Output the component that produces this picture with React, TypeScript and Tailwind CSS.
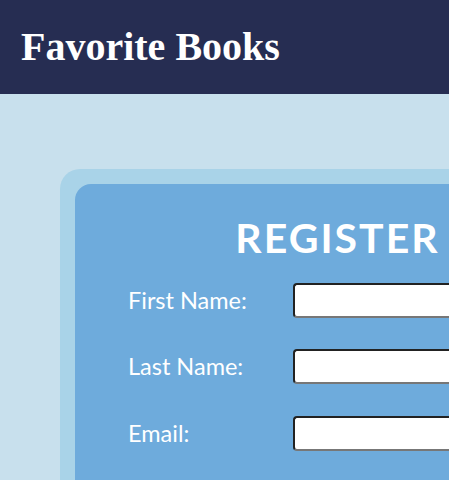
export default function App() {
  const fields = ["First Name:", "Last Name:", "Email:"];

  return (
    <div className="w-[449px] h-[480px] overflow-hidden bg-[#c8e0ed]">
      <header className="bg-[#262d52] h-[94px] flex items-center px-[21px]">
        <h1 className="text-white font-bold text-[40px] leading-none font-['Liberation_Serif',serif]">Favorite Books</h1>
      </header>
      <div className="pt-[75px] pl-[60px]">
        <div className="w-[555px] bg-[#a9d3e8] rounded-[20px] p-[15px]">
          <div className="bg-[#6eabdc] rounded-[16px] pt-[30px] pb-[80px] pl-[53px] font-['Lato',sans-serif] text-white">
            <h2 className="text-center pr-[53px] font-bold text-[41px] leading-[48px] tracking-[2px]">REGISTER</h2>
            <form className="mt-[21px] flex flex-col gap-[31px]">
              {fields.map((f) => (
                <div key={f} className="flex items-center">
                  <label className="w-[165px] text-[23.5px]">{f}</label>
                  <input type="text" className="w-[230px] h-[35px] bg-white rounded-[4px] border-2 border-t-[#222] border-l-[#222] border-b-[#777] border-r-[#777]" />
                </div>
              ))}
            </form>
          </div>
        </div>
      </div>
    </div>
  );
}
